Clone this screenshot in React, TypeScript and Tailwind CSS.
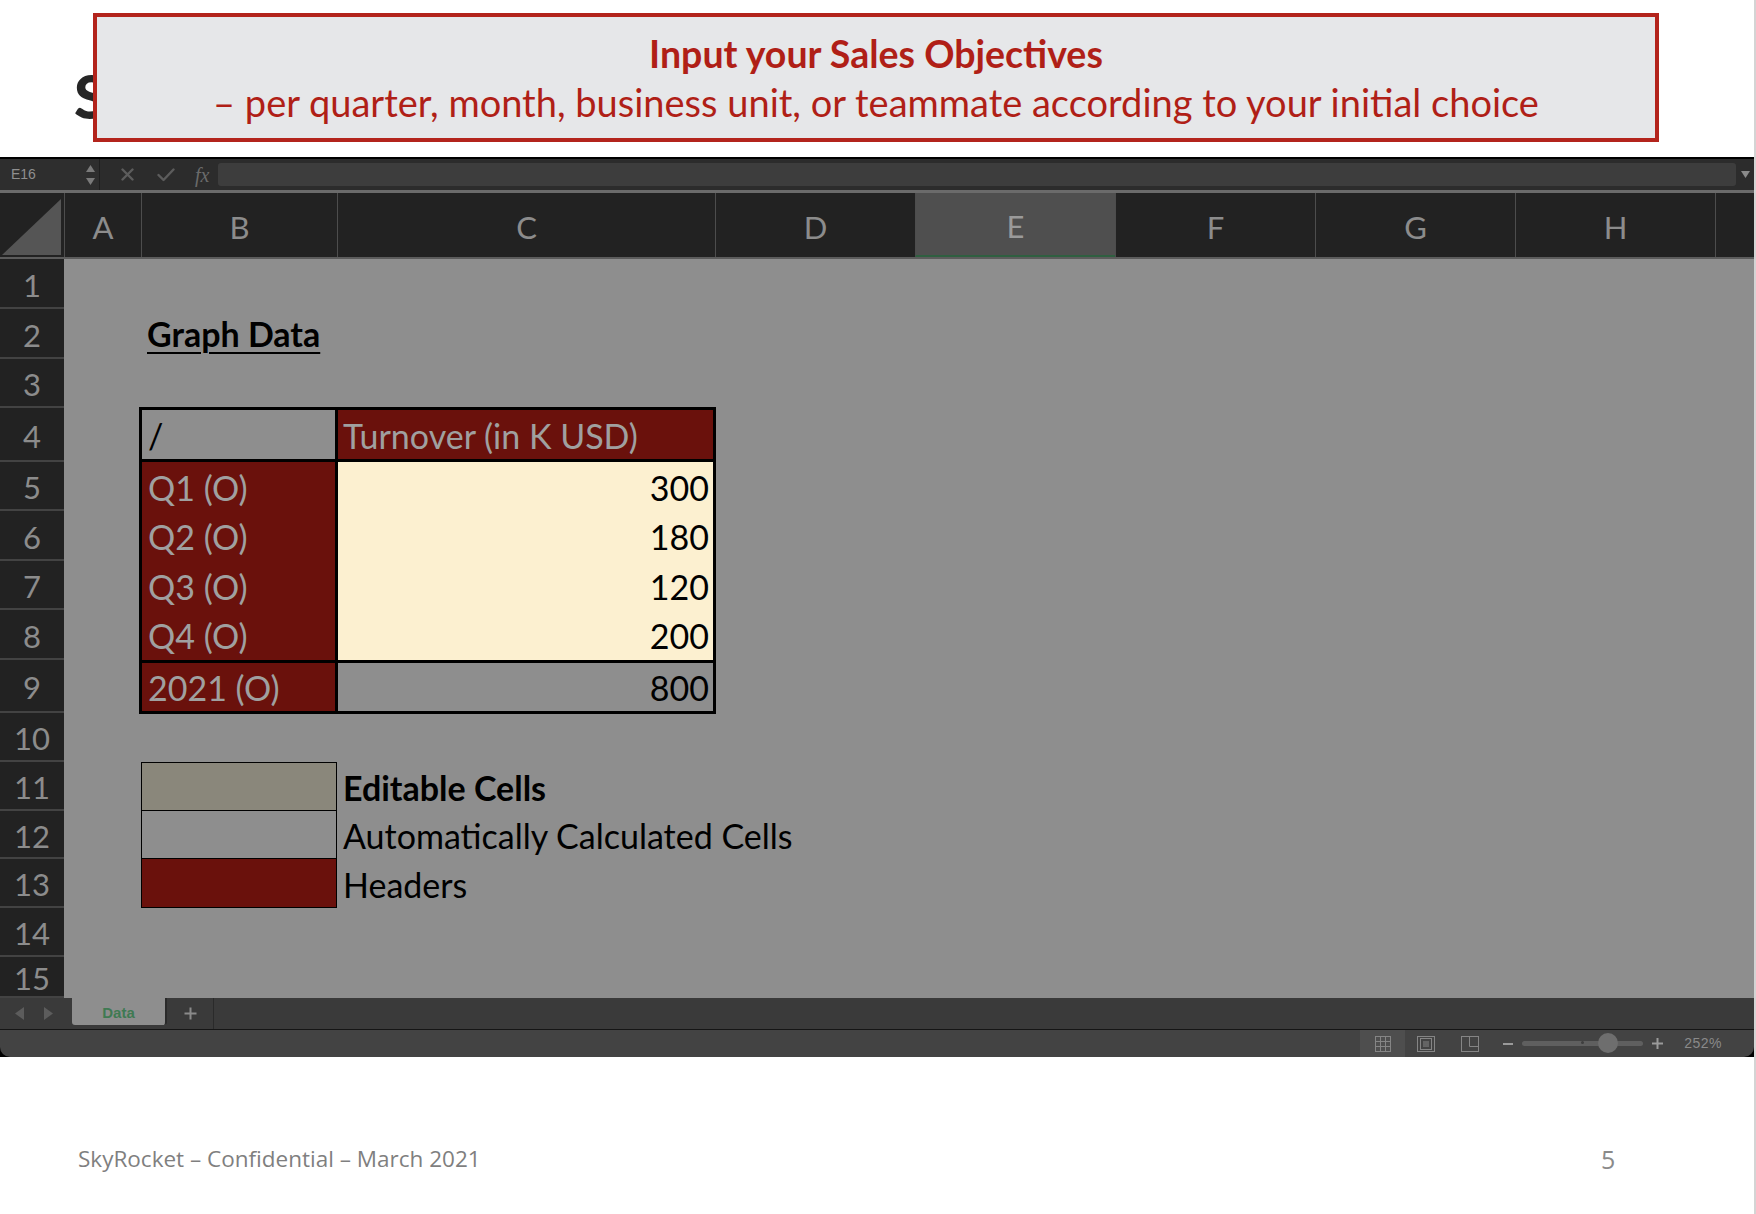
import React from "react";

const rowDefs = [
  { n: 1, h: "h-[50px]" },
  { n: 2, h: "h-[50px]" },
  { n: 3, h: "h-[49px]" },
  { n: 4, h: "h-[54px]" },
  { n: 5, h: "h-[49px]" },
  { n: 6, h: "h-[50px]" },
  { n: 7, h: "h-[49px]" },
  { n: 8, h: "h-[50px]" },
  { n: 9, h: "h-[53px]" },
  { n: 10, h: "h-[49px]" },
  { n: 11, h: "h-[49px]" },
  { n: 12, h: "h-[48px]" },
  { n: 13, h: "h-[49px]" },
  { n: 14, h: "h-[49px]" },
  { n: 15, h: "h-[41px]" },
];

const colDefs = [
  { l: "A", w: "w-[77px]" },
  { l: "B", w: "w-[196px]" },
  { l: "C", w: "w-[378px]" },
  { l: "D", w: "w-[200px]" },
  { l: "E", w: "w-[200px]" },
  { l: "F", w: "w-[200px]" },
  { l: "G", w: "w-[200px]" },
  { l: "H", w: "w-[200px]" },
  { l: "", w: "w-[39px]" },
];

const quarters = [
  { q: "Q1 (O)", v: "300", h: "h-[49px]" },
  { q: "Q2 (O)", v: "180", h: "h-[50px]" },
  { q: "Q3 (O)", v: "120", h: "h-[49px]" },
  { q: "Q4 (O)", v: "200", h: "h-[50px]" },
];

function FormulaBar() {
  return (
    <div className="flex h-[36px] items-stretch border-t-2 border-black border-b-[3px] border-b-[#6b6b6b] bg-[#2c2c2c]">
      <div className="flex w-[100px] items-center justify-between bg-[#2e2e2e] pl-[11px] pr-[4px] border-r border-[#1f1f1f]">
        <span className="font-['Liberation_Sans',sans-serif] text-[14px] text-[#8f8f8f]">E16</span>
        <div className="flex flex-col items-center gap-[6px] text-[#7a7a7a]">
          <svg width="9" height="7" viewBox="0 0 9 7"><polygon points="4.5,0 9,7 0,7" fill="#7a7a7a" /></svg>
          <svg width="9" height="7" viewBox="0 0 9 7"><polygon points="0,0 9,0 4.5,7" fill="#7a7a7a" /></svg>
        </div>
      </div>
      <div className="flex items-center pl-[20px]">
        <svg width="13" height="13" viewBox="0 0 13 13" className="ml-[1px]">
          <path d="M1.5 1.5 L11.5 11.5 M11.5 1.5 L1.5 11.5" stroke="#5c5c5c" strokeWidth="2.4" strokeLinecap="round" />
        </svg>
        <svg width="18" height="14" viewBox="0 0 18 14" className="ml-[23px]">
          <path d="M1.5 7 L6.5 12 L16.5 1.5" stroke="#5c5c5c" strokeWidth="2.4" fill="none" strokeLinecap="round" strokeLinejoin="round" />
        </svg>
        <span className="ml-[20px] font-['Liberation_Serif',serif] italic text-[20px] text-[#6a6a6a] leading-none">fx</span>
      </div>
      <div className="ml-[9px] my-[4px] w-[1518px] rounded-[3px] bg-[#3d3d3d]" />
      <div className="flex flex-1 items-center justify-center">
        <svg width="9" height="7" viewBox="0 0 9 7"><polygon points="0,0 9,0 4.5,7" fill="#8a8a8a" /></svg>
      </div>
    </div>
  );
}

function ColumnHeader() {
  return (
    <div className="flex h-[66px] bg-[#222222] border-b-2 border-[#5c5c5c]">
      <div className="relative w-[64px] h-full">
        <svg width="64" height="64" viewBox="0 0 64 64" className="absolute left-0 top-0">
          <polygon points="2,62 61,6 61,62" fill="#555555" />
        </svg>
      </div>
      {colDefs.map((c) => (
        <div
          key={c.l + c.w}
          className={`${c.w} flex items-center justify-center pt-[5px] border-l border-[#4d4d4d] font-['Lato',sans-serif] text-[31px] ${
            c.l === "E" ? "bg-[#4f4f4f] text-[#9a9a9a] border-b-2 border-b-[#2f5f40]" : "text-[#8c8c8c]"
          }`}
        >
          {c.l}
        </div>
      ))}
    </div>
  );
}

function GraphTable() {
  const txt = "font-['Lato',sans-serif] text-[34px] leading-none";
  return (
    <div className="-ml-[2px] -mr-[1px] -mt-[1px] -mb-[1px] flex flex-1 flex-col border-[3px] border-black">
      <div className="flex h-[52px] border-b-[3px] border-black">
        <div className={`w-[196px] flex items-center pl-[6px] pt-[2px] bg-[#8e8e8e] border-r-[3px] border-black text-black ${txt}`}>/</div>
        <div className={`flex-1 flex items-center pl-[5px] pt-[2px] bg-[#6a110c] text-[#a0a0a0] ${txt}`}>Turnover (in K USD)</div>
      </div>
      {quarters.map((r) => (
        <div key={r.q} className={`flex ${r.h}`}>
          <div className={`w-[196px] flex items-center pl-[6px] pt-[2px] bg-[#6a110c] border-r-[3px] border-black text-[#a0a0a0] ${txt}`}>{r.q}</div>
          <div className={`flex-1 flex items-center justify-end pr-[4px] pt-[2px] bg-[#fcf0d0] text-black ${txt}`}>{r.v}</div>
        </div>
      ))}
      <div className="flex flex-1 border-t-[3px] border-black">
        <div className={`w-[196px] flex items-center pl-[6px] pt-[2px] bg-[#6a110c] border-r-[3px] border-black text-[#a0a0a0] ${txt}`}>2021 (O)</div>
        <div className={`flex-1 flex items-center justify-end pr-[4px] pt-[2px] bg-[#8e8e8e] text-black ${txt}`}>800</div>
      </div>
    </div>
  );
}

function Legend() {
  const txt = "font-['Lato',sans-serif] text-[34px] leading-none text-black";
  const items = [
    { bg: "bg-[#8a877b]", label: "Editable Cells", bold: true, h: "h-[49px]" },
    { bg: "bg-[#8e8e8e]", label: "Automatically Calculated Cells", bold: false, h: "h-[48px]" },
    { bg: "bg-[#6a110c]", label: "Headers", bold: false, h: "h-[49px]" },
  ];
  return (
    <div className="flex flex-col">
      {items.map((it, i) => (
        <div key={it.label} className={`flex ${it.h}`}>
          <div
            className={`w-[196px] ${it.bg} border-black border-l-[1.5px] border-r-[1.5px] ${i === 0 ? "border-t-[1.5px]" : ""} border-b-[1.5px]`}
          />
          <div className={`flex items-center pl-[6px] pt-[2px] whitespace-nowrap ${txt} ${it.bold ? "font-bold" : ""}`}>{it.label}</div>
        </div>
      ))}
    </div>
  );
}

function SheetBody() {
  return (
    <div className="flex h-[739px] overflow-hidden">
      <div className="flex w-[64px] flex-col bg-[#222222]">
        {rowDefs.map((r) => (
          <div
            key={r.n}
            className={`${r.h} flex items-center justify-center pt-[4px] border-b-2 border-[#434343] font-['Lato',sans-serif] text-[31px] text-[#8c8c8c]`}
          >
            {r.n}
          </div>
        ))}
      </div>
      <div className="grid flex-1 grid-cols-[77px_196px_378px_200px_200px_200px_200px_200px_39px] grid-rows-[50px_50px_49px_54px_49px_50px_49px_50px_53px_49px_49px_48px_49px_49px_41px] bg-[#8e8e8e]">
        <div className="col-start-2 row-start-2 flex items-center pl-[6px] whitespace-nowrap">
          <span className="font-['Lato',sans-serif] text-[34px] font-bold leading-none text-black underline decoration-[2px] underline-offset-[5px]">
            Graph Data
          </span>
        </div>
        <div className="col-start-2 col-span-2 row-start-4 row-span-6 flex flex-col">
          <GraphTable />
        </div>
        <div className="col-start-2 col-span-3 row-start-11 row-span-3">
          <Legend />
        </div>
      </div>
    </div>
  );
}

function TabBar() {
  return (
    <div className="flex h-[32px] bg-[#3a3a3a] border-b border-[#151515]">
      <div className="flex w-[72px] items-center gap-[20px] pl-[15px]">
        <svg width="9" height="13" viewBox="0 0 9 13"><polygon points="9,0 9,13 0,6.5" fill="#5c5c5c" /></svg>
        <svg width="9" height="13" viewBox="0 0 9 13"><polygon points="0,0 0,13 9,6.5" fill="#5c5c5c" /></svg>
      </div>
      <div className="flex h-[27px] w-[95px] items-center justify-center pt-[3px] rounded-b-[3px] bg-[#8e8e8e] border-r-2 border-[#2a2a2a]">
        <span className="font-['Liberation_Sans',sans-serif] text-[15px] font-bold text-[#3f7a53]">Data</span>
      </div>
      <div className="flex w-[47px] items-center justify-center border-r border-[#2a2a2a]">
        <svg width="13" height="13" viewBox="0 0 13 13"><path d="M6.5 0.5 V12.5 M0.5 6.5 H12.5" stroke="#8a8a8a" strokeWidth="2" /></svg>
      </div>
    </div>
  );
}

function StatusBar() {
  return (
    <div className="flex h-[27px] items-stretch rounded-b-[10px] bg-[#434343]">
      <div className="flex-1" />
      <div className="flex w-[45px] items-center justify-center bg-[#4e4e4e]">
        <svg width="16" height="16" viewBox="0 0 16 16">
          <rect x="0.5" y="0.5" width="15" height="15" fill="none" stroke="#858585" />
          <path d="M5.5 0.5 V15.5 M10.5 0.5 V15.5 M0.5 5.5 H15.5 M0.5 10.5 H15.5" stroke="#858585" />
        </svg>
      </div>
      <div className="flex w-[42px] items-center justify-center">
        <svg width="18" height="16" viewBox="0 0 18 16">
          <rect x="0.5" y="0.5" width="17" height="15" fill="none" stroke="#858585" />
          <rect x="3.5" y="2.5" width="11" height="11" fill="none" stroke="#858585" />
          <path d="M6 6 H12 M6 8 H12 M6 10 H12" stroke="#858585" />
        </svg>
      </div>
      <div className="flex w-[46px] items-center justify-center">
        <svg width="18" height="16" viewBox="0 0 18 16">
          <rect x="0.5" y="0.5" width="17" height="15" fill="none" stroke="#858585" />
          <path d="M8.5 0.5 V10.5 H17.5" stroke="#858585" fill="none" />
        </svg>
      </div>
      <div className="ml-[10px] flex items-center">
        <div className="h-[2px] w-[10px] bg-[#9a9a9a]" />
      </div>
      <div className="relative ml-[9px] flex w-[121px] items-center">
        <div className="h-[5px] w-full rounded-full bg-[#5f5f5f]" />
        <div className="absolute left-[59px] top-[11px] h-[3px] w-[3px] rounded-full bg-[#3e3e3e]" />
        <div className="absolute left-[76px] top-[3px] h-[20px] w-[20px] rounded-full bg-[#6e6e6e]" />
      </div>
      <div className="ml-[9px] flex items-center">
        <svg width="11" height="11" viewBox="0 0 11 11"><path d="M5.5 0 V11 M0 5.5 H11" stroke="#9a9a9a" strokeWidth="2" /></svg>
      </div>
      <div className="ml-[21px] mr-[32px] flex items-center font-['Liberation_Sans',sans-serif] text-[14px] tracking-[0.5px] text-[#8a8a8a]">
        252%
      </div>
    </div>
  );
}

export default function App() {
  return (
    <div className="relative h-[1214px] w-[1756px] overflow-hidden bg-white">
      {/* slide title peeking from behind the box */}
      <div className="absolute left-[74px] top-[66px] font-['Lato',sans-serif] text-[60px] font-black leading-none text-[#262626]">
        S
      </div>
      <div className="relative h-[157px] pl-[93px] pt-[13px]">
        <div className="flex h-[129px] w-[1566px] flex-col items-center justify-center border-4 border-[#b3241c] bg-[#e6e7e9] font-['Lato',sans-serif] text-[#b01f17]">
          <div className="text-[37.5px] font-bold leading-[48px]">Input your Sales Objectives</div>
          <div className="text-[38px] leading-[48px]">
            – per quarter, month, business unit, or teammate according to your initial choice
          </div>
        </div>
      </div>
      <div className="flex w-[1754px] flex-col bg-black">
        <FormulaBar />
        <ColumnHeader />
        <SheetBody />
        <TabBar />
        <StatusBar />
      </div>
      <div className="relative h-[157px]">
        <div className="absolute left-[78px] top-[85px] font-['Open_Sans',sans-serif] text-[22.5px] text-[#7f7f7f]">
          SkyRocket – Confidential – March 2021
        </div>
        <div className="absolute left-[1601px] top-[84px] font-['Open_Sans',sans-serif] text-[25px] text-[#8a8a8a]">
          5
        </div>
      </div>
      <div className="absolute right-0 top-0 h-full w-[2px] bg-[#d4d4d4]" />
    </div>
  );
}
